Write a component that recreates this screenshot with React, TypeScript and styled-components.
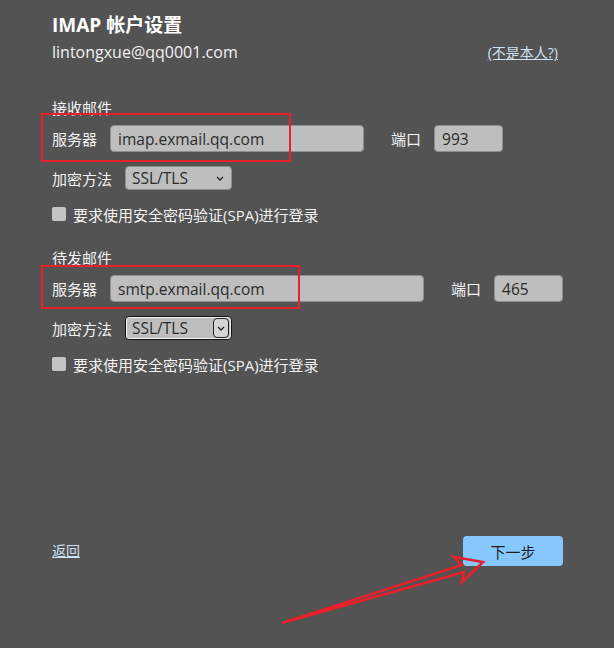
import styled, { createGlobalStyle } from 'styled-components';

const GlobalStyle = createGlobalStyle`
  html, body {
    margin: 0;
    padding: 0;
    background: #535353;
  }
  body {
    font-family: "Open Sans", "Noto Sans CJK SC", sans-serif;
    color: #f2f2f2;
  }
`;

const Page = styled.div`
  position: relative;
  width: 614px;
  height: 648px;
  box-sizing: border-box;
  padding: 11px 51px 82px 52px;
  display: flex;
  flex-direction: column;
  background: #535353;
  overflow: hidden;
`;

const Title = styled.h1`
  margin: 0;
  font-size: 19px;
  line-height: 28px;
  font-weight: 700;
  color: #ffffff;
`;

const AccountRow = styled.div`
  margin-top: 3px;
  display: flex;
  justify-content: space-between;
  align-items: center;
  height: 20px;
  font-size: 16px;
`;

const Link = styled.a<{ $size?: number; $inset?: number; $lift?: number }>`
  color: #cde2f4;
  text-decoration: underline;
  font-size: ${(p) => p.$size ?? 14}px;
  margin-right: ${(p) => p.$inset ?? 0}px;
  margin-bottom: ${(p) => p.$lift ?? 0}px;
  cursor: pointer;
`;

const Section = styled.section<{ $top: number }>`
  margin-top: ${(p) => p.$top}px;
  display: flex;
  flex-direction: column;
`;

const SectionTitle = styled.div`
  font-size: 15px;
  line-height: 20px;
  color: #f2f2f2;
`;

const FieldRow = styled.div<{ $top: number }>`
  margin-top: ${(p) => p.$top}px;
  display: flex;
  align-items: center;
  font-size: 15px;
`;

const Label = styled.span<{ $gap?: number }>`
  margin-right: ${(p) => p.$gap ?? 13}px;
  white-space: nowrap;
`;

const TextBox = styled.div<{ $width: number }>`
  width: ${(p) => p.$width}px;
  height: 27px;
  box-sizing: border-box;
  padding: 0 7px;
  display: flex;
  align-items: center;
  background: #bebebe;
  border: 1px solid #8e8e8e;
  border-radius: 4px;
  color: #2b2b2b;
  font-size: 15.5px;
`;

const PortLabel = styled.span`
  margin-left: 27px;
  margin-right: 13px;
`;

const SelectBox = styled.div<{ $focused?: boolean }>`
  width: 107px;
  height: 24px;
  box-sizing: border-box;
  padding-left: 6px;
  display: flex;
  align-items: center;
  justify-content: space-between;
  background: #bebebe;
  border: 1px solid ${(p) => (p.$focused ? '#111111' : '#8e8e8e')};
  box-shadow: ${(p) => (p.$focused ? 'inset 0 0 0 1px #f4f4f4' : 'none')};
  border-radius: 4px;
  color: #2b2b2b;
  font-size: 15.5px;
`;

const Chevron = styled.span<{ $focused?: boolean }>`
  width: 16px;
  height: ${(p) => (p.$focused ? '20px' : '22px')};
  margin-right: ${(p) => (p.$focused ? '2px' : '3px')};
  box-sizing: border-box;
  display: flex;
  align-items: center;
  justify-content: center;
  border: ${(p) => (p.$focused ? '1px solid #222222' : 'none')};
  border-radius: 4px;
  background: ${(p) => (p.$focused ? '#d4d4d4' : 'transparent')};
`;

const CheckRow = styled.label`
  margin-top: 14px;
  height: 20px;
  display: flex;
  align-items: center;
  font-size: 15px;
  color: #f2f2f2;
`;

const CheckSquare = styled.span`
  width: 14px;
  height: 14px;
  margin-right: 7px;
  background: #c4c4c4;
  border-radius: 2px;
`;

const Footer = styled.div`
  margin-top: auto;
  display: flex;
  justify-content: space-between;
  align-items: center;
`;

const NextButton = styled.button`
  width: 100px;
  height: 30px;
  border: none;
  border-radius: 4px;
  background: #86c8fe;
  color: #1e1e1e;
  font-family: inherit;
  font-size: 15px;
  padding: 0;
`;

const Highlight = styled.div<{ $x: number; $y: number; $w: number; $h: number }>`
  position: absolute;
  left: ${(p) => p.$x}px;
  top: ${(p) => p.$y}px;
  width: ${(p) => p.$w}px;
  height: ${(p) => p.$h}px;
  box-sizing: border-box;
  border: 2px solid #e8202a;
  pointer-events: none;
`;

const ArrowLayer = styled.svg`
  position: absolute;
  left: 0;
  top: 0;
  pointer-events: none;
`;

const ChevronIcon = () => (
  <svg width="8" height="5" viewBox="0 0 8 5">
    <path d="M1 1 L4 4 L7 1" fill="none" stroke="#222" strokeWidth="1.3" />
  </svg>
);

interface ServerBlockProps {
  title: string;
  host: string;
  port: string;
  hostWidth: number;
  focused?: boolean;
  top: number;
}

const ServerBlock: React.FC<ServerBlockProps> = ({ title, host, port, hostWidth, focused, top }) => (
  <Section $top={top}>
    <SectionTitle>{title}</SectionTitle>

    <FieldRow $top={7}>
      <Label>服务器</Label>
      <TextBox $width={hostWidth}>{host}</TextBox>
      <PortLabel>端口</PortLabel>
      <TextBox $width={69}>{port}</TextBox>
    </FieldRow>

    <FieldRow $top={14}>
      <Label>加密方法</Label>
      <SelectBox $focused={focused}>
        SSL/TLS
        <Chevron $focused={focused}>
          <ChevronIcon />
        </Chevron>
      </SelectBox>
    </FieldRow>

    <CheckRow>
      <CheckSquare />
      要求使用安全密码验证(SPA)进行登录
    </CheckRow>
  </Section>
);

const App: React.FC = () => (
  <>
    <GlobalStyle />
    <Page>
      <Title>IMAP 帐户设置</Title>

      <AccountRow>
        <span>lintongxue@qq0001.com</span>
        <Link $size={14} $inset={5}>(不是本人?)</Link>
      </AccountRow>

      <ServerBlock title="接收邮件" host="imap.exmail.qq.com" port="993" hostWidth={254} top={36} />
      <ServerBlock title="待发邮件" host="smtp.exmail.qq.com" port="465" hostWidth={314} top={24} focused />

      <Footer>
        <Link $size={14} $lift={3}>返回</Link>
        <NextButton>下一步</NextButton>
      </Footer>

      <Highlight $x={41} $y={113} $w={250} $h={49} />
      <Highlight $x={41} $y={265} $w={259} $h={44} />

      <ArrowLayer width="614" height="648" viewBox="0 0 614 648">
        <polygon
          points="282,623 462,565 454,557 483,562 462,582 464,572"
          fill="none"
          stroke="#e8202a"
          strokeWidth="2.5"
          strokeLinejoin="miter"
        />
      </ArrowLayer>
    </Page>
  </>
);

export default App;
